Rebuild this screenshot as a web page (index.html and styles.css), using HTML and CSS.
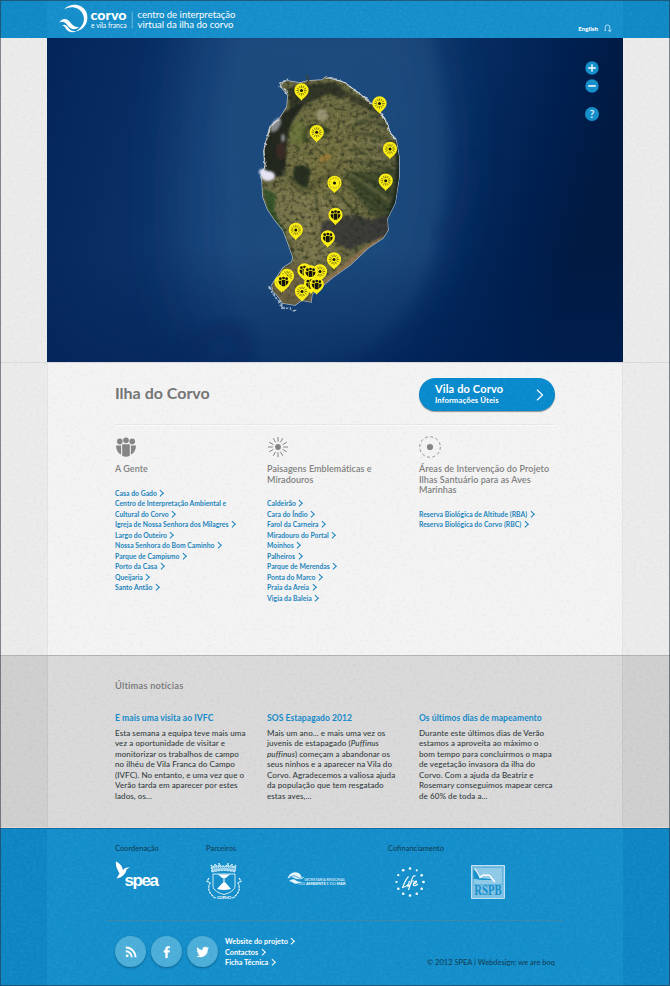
FILE: index.html
```
<!DOCTYPE html>
<html lang="pt">
<head>
<meta charset="utf-8">
<title>Corvo e Vila Franca</title>
<link rel="stylesheet" href="styles.css">
</head>
<body>
<svg class="defs" width="0" height="0" aria-hidden="true">
  <defs>
    <g id="people"><circle cx="-6.200" cy="-5.600" r="2.800"/><circle cx="0" cy="-6.800" r="2.800"/><circle cx="6.200" cy="-5.600" r="2.800"/><path d="M-3.800-2.800h7.600V8.800a9 9 0 0 1-7.600 0zM-4.900-1.500V7.600C-8 6-10 3-10-1.500zM4.900-1.500H10C10 3 8 6 4.900 7.600z"/></g>
    <g id="sun"><circle r="2.900"/><path d="M0-5.200V-10M0 5.200V10M5.200 0H10M-5.200 0H-10M2.400-4.700 4.800-8.800M-2.400-4.700-4.800-8.800M2.400 4.700 4.800 8.800M-2.400 4.700-4.800 8.800M4.600-2.400 8.800-4.800M-4.600-2.400-8.800-4.800M4.600 2.400 8.800 4.800M-4.600 2.400-8.800 4.800" fill="none" stroke="currentColor" stroke-width="1"/></g>
    <g id="area"><circle r="3.100"/><circle r="10.300" fill="none" stroke="currentColor" stroke-width=".9" stroke-dasharray="2.9 2.490"/></g>
    <path id="drop" d="M0 10.200C-2 7.400-7.100 5-7.100-.2A7.100 7.100 0 0 1 7.100-.2C7.100 5 2 7.400 0 10.200z" fill="#fbee15"/>
    <g id="pin-sun"><use href="#drop"/><use href="#sun" transform="scale(.52)"/></g>
    <g id="pin-area"><use href="#drop"/><use href="#area" transform="scale(.5)"/></g>
    <g id="pin-people"><use href="#drop"/><use href="#people" transform="scale(.5)"/></g>
  </defs>
</svg>

<div class="page">
  <header class="band header">
    <div class="column header-row">
      <svg class="logo" width="190" height="34" viewBox="57 0 190 34" fill="#fff">
        <path d="M64 9.500C70 2.500 82 3.500 86 11.500C90 20 85 30 75.500 31.500C83 27 86 20 82.500 13.500C79 7 71 5.500 64 9.500z"/>
        <path d="M59 22.500C63 17.500 67 18.500 70 22C73 26 75 27.500 79 27C75 30.500 71 29.500 68 26C65 22 63 21 59 22.500z"/>
        <path d="M62 25.500C65 23.500 67 26 69 28.500C71 31 73 31.500 77 31C72 33.500 68 32 66 29C65 27 64 25.500 62 25.500z"/>
        <text x="90.500" y="19.500" class="logo-name" textLength="36" lengthAdjust="spacingAndGlyphs">corvo</text>
        <text x="91" y="28" class="logo-sub" textLength="35.500" lengthAdjust="spacingAndGlyphs">e vila franca</text>
        <path d="M131.800 11.500h.7v17h-.7z" opacity=".55"/>
        <text x="137.500" y="18.300" class="logo-tag" textLength="98" lengthAdjust="spacingAndGlyphs">centro de interpretação</text>
        <text x="137.500" y="28" class="logo-tag" textLength="96" lengthAdjust="spacingAndGlyphs">virtual da ilha do corvo</text>
      </svg>
      <a class="lang">English
        <svg width="8" height="9" viewBox="0 0 8 9" fill="none" stroke="#d9effa" stroke-width=".8"><path d="M1.200 6.500V3.200a2.300 2.300 0 0 1 4.600 0V7.500M4.200 6l1.600 1.700L7.500 6M.5 6.500h1.500"/></svg>
      </a>
    </div>
  </header>

  <div class="map-band">
    <div class="map">
      <svg class="island-map" width="576" height="324" viewBox="47 38 576 324">
        <defs>
          <linearGradient id="sea" x1="0" y1="0" x2="1" y2=".15">
            <stop offset="0" stop-color="#02245a"/><stop offset=".2" stop-color="#0a2f65"/><stop offset=".5" stop-color="#113a6e"/><stop offset=".75" stop-color="#062c60"/><stop offset=".9" stop-color="#001f50"/><stop offset="1" stop-color="#001a42"/>
          </linearGradient>
          <linearGradient id="deep" x1="0" y1="0" x2="0" y2="1"><stop offset=".65" stop-color="#002055" stop-opacity="0"/><stop offset="1" stop-color="#002055" stop-opacity=".55"/></linearGradient>
          <radialGradient id="land" cx=".46" cy=".4" r=".6"><stop offset="0" stop-color="#757140"/><stop offset=".5" stop-color="#6a6a42"/><stop offset="1" stop-color="#56563d"/></radialGradient>
          <filter id="soft1" x="-30%" y="-30%" width="160%" height="160%"><feGaussianBlur stdDeviation=".8"/></filter>
          <filter id="soft3" x="-30%" y="-30%" width="160%" height="160%"><feGaussianBlur stdDeviation="2.500"/></filter>
          <filter id="soft8" x="-30%" y="-30%" width="160%" height="160%"><feGaussianBlur stdDeviation="7"/></filter>
          <filter id="soft25" x="-50%" y="-50%" width="200%" height="200%"><feGaussianBlur stdDeviation="26"/></filter>
          <filter id="rough" x="-10%" y="-10%" width="120%" height="120%"><feTurbulence type="fractalNoise" baseFrequency=".25" numOctaves="2" seed="4"/><feDisplacementMap in="SourceGraphic" scale="4" xChannelSelector="R" yChannelSelector="G"/></filter>
          <filter id="grain" x="0" y="0" width="100%" height="100%" color-interpolation-filters="sRGB"><feTurbulence type="fractalNoise" baseFrequency=".22 .25" numOctaves="4" seed="8"/><feColorMatrix values="0 0 0 0 .1  0 0 0 0 .13  0 0 0 0 .08  3 0 0 0 -1.400"/></filter>
          <filter id="grain2" x="0" y="0" width="100%" height="100%" color-interpolation-filters="sRGB"><feTurbulence type="fractalNoise" baseFrequency=".3" numOctaves="3" seed="21"/><feColorMatrix values="0 0 0 0 .68  0 0 0 0 .66  0 0 0 0 .42  0 3 0 0 -1.500"/></filter>
          <path id="isle" d="M280 83L288 81L300 83L308 81L322 80L326 77L335 80L345 83L353 89L365 98L372 104L380 112L387 123L390 133L396 140L399 157L399 177L397 190L395 203L387 219L388 230L383 238L368 248L350 265L333 277L320 288L312 294L311 302L302 300L295 305L283 303L277 295L273 291L272 285L275 280L283 268L292 262L293 257L288 243L283 230L275 220L268 210L263 197L262 180L261 177L265 167L264 150L270 127L280 118L287 107L288 95L282 88z"/>
          <clipPath id="island"><use href="#isle"/></clipPath>
        </defs>
        <rect x="47" y="38" width="576" height="324" fill="url(#sea)"/>
        <path d="M200 0L420 0Q450 95 444 190Q440 270 390 325Q350 380 290 400Q205 380 185 290Q165 190 200 0z" fill="#1e4e83" opacity=".75" filter="url(#soft25)"/>
        <path d="M250 0L420 0Q452 95 446 195Q440 280 390 330Q345 370 270 380Q215 300 225 200Q205 100 250 0z" fill="#22507f" opacity=".45" filter="url(#soft8)"/>
        <path d="M190 350Q212 325 235 330T232 370" stroke="#0a2b60" stroke-width="13" fill="none" opacity=".6" filter="url(#soft8)"/>
        <path d="M440 240Q480 190 470 160" stroke="#0a2c61" stroke-width="16" fill="none" opacity=".4" filter="url(#soft8)"/>
        <rect x="47" y="38" width="576" height="324" fill="url(#deep)"/>
        <use href="#isle" fill="none" stroke="#b4c0cd" stroke-width="1.400"/>
        <g clip-path="url(#island)">
          <rect x="255" y="70" width="150" height="245" fill="url(#land)"/>
          <path d="M262 185L290 190L345 200L330 262L296 264L284 230z" fill="#7c7750" opacity=".7" filter="url(#soft3)"/>
          <rect x="255" y="70" width="150" height="245" filter="url(#grain)" opacity=".6"/>
          <rect x="255" y="70" width="150" height="245" filter="url(#grain2)" opacity=".3"/>
          <path d="M284 112L305 103L293 120L287 140L285 176L264 178L262 150L272 128z" fill="#1d201e" opacity=".9" filter="url(#soft1)"/>
          <path d="M288 88L312 84L335 82L348 94L340 98L328 94L308 103L290 112z" fill="#1e231b" opacity=".7" filter="url(#soft1)"/>
          <path d="M345 90L368 102L384 116L375 112L352 102z" fill="#20251c" opacity=".6" filter="url(#soft1)"/>
          <ellipse cx="281" cy="151" rx="5" ry="9" fill="#4c2f2a" opacity=".6" filter="url(#soft1)"/>
          <path d="M263 188L276 194L274 212L284 230L286 242L268 214z" fill="#264d22" opacity=".75" filter="url(#soft1)"/>
          <path d="M302 141Q298 130 310 125Q330 124 329 134Q324 136 322 128Q312 125 306 131Q306 138 312 143z" fill="#222e18" opacity=".8" filter="url(#soft1)"/>
          <path d="M294 167Q303 162 311 170L307 188Q299 187 293 178z" fill="#1d261d" opacity=".85" filter="url(#soft1)"/>
          <path d="M288 176Q290 186 301 192L316 184L334 172L342 160" stroke="#2d3520" stroke-width="4" fill="none" opacity=".55" filter="url(#soft3)"/>
          <ellipse cx="322" cy="115" rx="6" ry="6" fill="#b4ad92" opacity=".6" filter="url(#soft1)"/>
          <ellipse cx="325" cy="158" rx="7" ry="3" fill="#a88136" opacity=".7" transform="rotate(-25 325 158)" filter="url(#soft1)"/>
          <ellipse cx="298" cy="133" rx="8" ry="12" fill="#6c7c3a" opacity=".6" filter="url(#soft3)"/>
          <path d="M345 172L400 168L398 205L385 225L362 205z" fill="#21301d" opacity=".5" filter="url(#soft3)"/>
          <path d="M322 222L352 214L372 220L393 214L388 236L362 244L350 250L336 243L320 240z" fill="#2e2e35" opacity=".75" filter="url(#soft1)"/>
          <path d="M395 140L402 150V195L390 222L388 216L395 190L396 165z" fill="#15201e" opacity=".85" filter="url(#soft1)"/>
          <path d="M272 286L288 266L310 262L312 302L280 305z" fill="#7a6647" opacity=".5" filter="url(#soft1)"/>
          <path d="M384 238L368 248L340 270L320 286" stroke="#a07b58" stroke-width="5" fill="none" opacity=".7" filter="url(#soft1)"/>
          <g fill="none" stroke="#1c2919" stroke-width="1.600" opacity=".6" filter="url(#soft1)">
            <path d="M348 136Q365 130 384 140M352 148Q366 152 376 166M345 172Q372 178 392 194M342 176Q365 186 388 210M338 182Q360 192 380 210M334 190Q350 206 364 224M326 196Q332 206 344 214M316 196L318 214M356 124Q370 114 382 116M350 128Q370 118 388 124M350 162Q370 160 392 172M288 240l4 6-3 3 5 4"/>
          </g>
          <path d="M283 170Q284 186 306 199L309 230L315 262M345 125Q360 116 375 118M346 144Q366 140 388 146M346 158Q366 154 384 160M340 168Q366 182 390 202M328 190Q338 204 352 218M320 196L326 212M341 150L334 172" stroke="#b3aa76" stroke-width="1.200" fill="none" opacity=".5" filter="url(#soft1)"/>
        </g>
        <path d="M325 78L335 79L345 83L353 89L365 98L372 104L380 112L387 123L390 133L396 139M280 118L270 127L264 150L265 167L261 177" stroke="#e4e9ee" stroke-width="1.200" fill="none" opacity=".75" filter="url(#rough)"/>
        <g fill="#e6e4f3" filter="url(#soft1)"><ellipse cx="268" cy="176" rx="7" ry="5"/><ellipse cx="263" cy="172" rx="4" ry="3"/><ellipse cx="276" cy="125" rx="4" ry="8" opacity=".5" transform="rotate(30 276 125)"/><ellipse cx="283" cy="138" rx="2" ry="4" opacity=".5"/></g>
        <path d="M288 93L280 86L281 84L288 79M270 287l3 8 6 6 4 7 8 1 4 2" stroke="#c6d0da" stroke-width="1.800" stroke-dasharray="3 1" fill="none" opacity=".8" filter="url(#rough)"/>
        <path d="M307 75l2 7" stroke="#3f4030" stroke-width="1.500"/>
        <g color="#15150d" fill="#15150d">
          <use href="#pin-sun" x="301.500" y="90.500"/><use href="#pin-sun" x="379.500" y="103.500"/><use href="#pin-sun" x="316.700" y="132.300"/><use href="#pin-sun" x="390" y="149"/><use href="#pin-sun" x="385.700" y="180.700"/><use href="#pin-area" x="334.500" y="183"/>
          <use href="#pin-people" x="335.500" y="215"/><use href="#pin-people" x="327.800" y="237.500"/><use href="#pin-sun" x="295.800" y="230"/><use href="#pin-sun" x="334" y="259.500"/>
          <use href="#pin-people" x="304.500" y="270.500"/><use href="#pin-sun" x="320" y="271.500"/><use href="#pin-people" x="310.500" y="272.500"/><use href="#pin-sun" x="287" y="276"/><use href="#pin-people" x="281.500" y="282.500"/><use href="#pin-people" x="283.500" y="281.500"/><use href="#pin-people" x="311" y="284"/><use href="#pin-people" x="316.700" y="284.500"/><use href="#pin-sun" x="302" y="291.500"/>
        </g>
      </svg>
      <div class="controls">
        <svg width="14" height="50" viewBox="0 0 14 50" fill="none" stroke="#fff" stroke-width="1.300"><g fill="#168fcb" stroke="none"><circle cx="7" cy="7" r="6.700"/><circle cx="7" cy="25" r="6.700"/></g><path d="M3.200 7h7.600M7 3.200v7.600M3.200 25h7.600"/></svg>
        <span class="help">?</span>
      </div>
    </div>
  </div>

  <main class="band content">
    <div class="column inner">
      <div class="title-row">
        <h1>Ilha do Corvo</h1>
        <a class="cta"><span><b>Vila do Corvo</b><small>Informações Úteis</small></span><svg width="8" height="12" viewBox="0 0 8 12" fill="none" stroke="#fff" stroke-width="1.200"><path d="M1 .8 6.500 6 1 11.200"/></svg></a>
      </div>
      <div class="columns">
        <section>
          <svg class="icon" width="22" height="22" viewBox="-11 -11 22 22"><use href="#people"/></svg>
          <h2>A Gente</h2>
          <ul class="links">
            <li>Casa do Gado</li><li>Centro de Interpretação Ambiental e<br>Cultural do Corvo</li><li>Igreja de Nossa Senhora dos Milagres</li><li>Largo do Outeiro</li><li>Nossa Senhora do Bom Caminho</li><li>Parque de Campismo</li><li>Porto da Casa</li><li>Queijaria</li><li>Santo Antão</li>
          </ul>
        </section>
        <section>
          <svg class="icon" width="22" height="22" viewBox="-11 -11 22 22"><use href="#sun"/></svg>
          <h2>Paisagens Emblemáticas e<br>Miradouros</h2>
          <ul class="links">
            <li>Caldeirão</li><li>Cara do Índio</li><li>Farol da Carneira</li><li>Miradouro do Portal</li><li>Moinhos</li><li>Palheiros</li><li>Parque de Merendas</li><li>Ponta do Marco</li><li>Praia da Areia</li><li>Vigia da Baleia</li>
          </ul>
        </section>
        <section>
          <svg class="icon" width="22" height="22" viewBox="-11 -11 22 22"><use href="#area"/></svg>
          <h2>Áreas de Intervenção do Projeto<br>Ilhas Santuário para as Aves<br>Marinhas</h2>
          <ul class="links">
            <li>Reserva Biológica de Altitude (RBA)</li><li>Reserva Biológica do Corvo (RBC)</li>
          </ul>
        </section>
      </div>
    </div>
  </main>

  <section class="band news">
    <div class="column inner">
      <h2>Últimas notícias</h2>
      <div class="columns">
        <article><h3>E mais uma visita ao IVFC</h3><p>Esta semana a equipa teve mais uma<br>vez a oportunidade de visitar e<br>monitorizar os trabalhos de campo<br>no ilhéu de Vila Franca do Campo<br>(IVFC). No entanto, e uma vez que o<br>Verão tarda em aparecer por estes<br>lados, os...</p></article>
        <article><h3>SOS Estapagado 2012</h3><p>Mais um ano... e mais uma vez os<br>juvenis de estapagado (<i>Puffinus<br>puffinus</i>) começam a abandonar os<br>seus ninhos e a aparecer na Vila do<br>Corvo. Agradecemos a valiosa ajuda<br>da população que tem resgatado<br>estas aves,...</p></article>
        <article><h3>Os últimos dias de mapeamento</h3><p>Durante este últimos dias de Verão<br>estamos a aproveita ao máximo o<br>bom tempo para concluirmos o mapa<br>de vegetação invasora da ilha do<br>Corvo. Com a ajuda da Beatriz e<br>Rosemary conseguimos mapear cerca<br>de 60% de toda a...</p></article>
      </div>
    </div>
  </section>

  <footer class="band footer">
    <div class="column inner">
      <div class="partners">
        <div class="partner coord"><h4>Coordenação</h4>
          <svg width="46" height="32" viewBox="115 860 46 32" fill="#fff"><path d="M116 861.500C119 863 122.500 865.500 122.800 870.300C124.500 868 127 867.200 129.800 867.300L126.500 869.500C125.500 874.500 122 877.500 116.500 878.500L119.500 873.500C117.500 869.500 115.300 866 116 861.500z"/><text x="124.500" y="886" class="spea" textLength="34.500">spea</text></svg>
        </div>
        <div class="partner parc"><h4>Parceiros</h4>
          <div class="logos">
            <svg width="36" height="40" viewBox="207 860 36 40" fill="none" stroke="#e4f4fc" stroke-width="1"><path d="M213 871L212 864l3 2 1-3 3 3 1-4 2 3h5l2-3 1 4 3-3 1 3 3-2-1 7Q225 868 213 871z" fill="#9dd4ef" stroke-dasharray="2 1"/><path d="M214 868q11-3 22 0" stroke="#168fcb" stroke-dasharray="1 1"/><path d="M214 873h22v12c0 4-5 7-11 8.500-6-1.500-11-4.500-11-8.500z" stroke-width=".9"/><path d="M218.500 873.500h13q-3 1-4.500 3.500h-4q-1.500-2.500-4.500-3.500zM224 881.500h2.500l5.500 6.500q-7 2-14 0zM218 889.500h14" fill="#fff" stroke="none"/><path d="M225 876v6" stroke-width="1.300"/><path d="M210 877l-2 3 3 2q-3 6 1 11 3 4 5 4M240 877l2 3-3 2q3 6-1 11-3 4-5 4" stroke-width="1.300" stroke-dasharray="2.400 .8"/><text x="218" y="898" class="crest" textLength="14.500">CORVO</text></svg>
            <svg width="60" height="20" viewBox="288 873 60 20" fill="#e9f7fd"><path d="M288.500 881Q290 875 295.500 874.300Q301.500 874.500 302.500 879H305l-2 2q-6 1-8.500-1.500-3-1.500-6 1.500zM290 883q4-3 7-.5 3 2 6 1l-2.500 1.500q-4 1.500-6 0-2-1.500-4.500-2z"/><path d="M291 879q4-3 7 0t6 0" fill="none" stroke="#168fcb" stroke-width=".7"/><text x="305.200" y="882.800" class="sec" textLength="41" lengthAdjust="spacingAndGlyphs">SECRETARIA REGIONAL</text><text x="300" y="887.400" class="sec" textLength="46.500" lengthAdjust="spacingAndGlyphs">DO <tspan font-weight="900">AMBIENTE</tspan> E DO <tspan font-weight="900">MAR</tspan></text></svg>
          </div>
        </div>
        <div class="partner cof"><h4>Cofinanciamento</h4>
          <div class="logos">
            <svg width="32" height="32" viewBox="-16 -16 32 32"><g fill="#fff"><circle cy="-13.500" r="1.300"/><circle cx="6.800" cy="-11.700" r="1.100"/><circle cx="11.700" cy="-6.800" r="1.300"/><circle cx="13.500" r="1.300"/><circle cx="11.700" cy="6.800" r="1.300"/><circle cx="6.800" cy="11.700" r="1.300"/><circle cy="13.500" r="1.300"/><circle cx="-6.800" cy="11.700" r="1.300"/><circle cx="-11.700" cy="6.800" r="1.300"/><circle cx="-13.500" r="1.100"/><circle cx="-11.700" cy="-6.800" r="1.100"/><circle cx="-6.800" cy="-11.700" r="1.300"/></g><path d="M-1.500-5.500Q-4-3-7.500 5.500Q-4 5-1.500 2M-.5-1L-2.200 4.500Q0 4 1.500.500M5.500-6Q2.500-7 1.500-1L-1.500 8M.5-1H4M3.200 2Q7 1 6.500-.8Q5-1.500 3.300 2Q3 5.500 8 2" fill="none" stroke="#fff" stroke-width="1.100"/></svg>
            <svg width="34" height="34" viewBox="0 0 34 34"><path d="M.5.500h33v33H.5z" fill="#7fc2e5" stroke="#bfe1f3"/><path d="M2.500 2.500h29v17h-29z" fill="#8fcbe8" stroke="#4aa9d8" stroke-width=".6"/><path d="M2.500 4Q6 7 9 13L22 14.500Q12 16 2.500 13.500z" fill="#168fcb"/><path d="M8.500 13Q12 9 15 10.500Q19 9 20.500 13L24 17" stroke="#fff" stroke-width="1.500" fill="none" stroke-linejoin="round"/><path d="M4 3.500L9 12.500" stroke="#fff" stroke-width=".9"/><text x="3.300" y="30.200" class="rspb" textLength="27.500" lengthAdjust="spacingAndGlyphs">RSPB</text></svg>
          </div>
        </div>
      </div>
      <div class="bottom">
        <div class="social">
          <a><svg width="12" height="12" viewBox="0 0 12 12" fill="none" stroke="#fff" stroke-width="1.900"><circle cx="2.200" cy="9.800" r="1.400" fill="#fff" stroke="none"/><path d="M.8 5.200a6 6 0 0 1 6 6M.8 1.500a9.700 9.700 0 0 1 9.700 9.700"/></svg></a>
          <a><svg width="12" height="12" viewBox="0 0 12 12" fill="#fff"><path d="M4.300 12V6.500H2.700V4.300h1.600V3C4.300 1 5.400.2 7 .2h1.900v2.100H7.600c-.7 0-.9.300-.9.900v1.100h2.200l-.3 2.200H6.700V12z"/></svg></a>
          <a><svg width="13" height="12" viewBox="0 0 24 22" fill="#fff"><path d="M23.900 3.600c-.8.400-1.700.7-2.700.8 1-.6 1.700-1.500 2.100-2.600-.9.500-1.900.9-3 1.100a4.800 4.800 0 0 0-8.200 4.400C8.100 7.100 4.600 5.200 2.200 2.300c-1.300 2.200-.7 5 1.500 6.500-.8 0-1.500-.2-2.200-.6 0 2.300 1.600 4.400 3.900 4.900-.7.200-1.400.2-2.200.1.600 1.900 2.400 3.300 4.500 3.400A9.700 9.700 0 0 1 .6 18.500a13.700 13.700 0 0 0 21-12.300c.9-.7 1.700-1.600 2.300-2.600z"/></svg></a>
        </div>
        <ul class="links foot-links"><li>Website do projeto</li><li>Contactos</li><li>Ficha Técnica</li></ul>
        <p class="copy">© 2012 SPEA | Webdesign: we are boq</p>
      </div>
    </div>
  </footer>
  <svg class="paper" width="670" height="986" aria-hidden="true">
    <defs>
      <filter id="fibre-dark" x="0" y="0" width="100%" height="100%" color-interpolation-filters="sRGB"><feTurbulence type="fractalNoise" baseFrequency=".3 .42" numOctaves="3" seed="3"/><feColorMatrix values="0 0 0 0 0  0 0 0 0 0  0 0 0 0 0  1 0 0 0 -.5"/></filter>
      <filter id="fibre-light" x="0" y="0" width="100%" height="100%" color-interpolation-filters="sRGB"><feTurbulence type="fractalNoise" baseFrequency=".3 .42" numOctaves="3" seed="3"/><feColorMatrix values="0 0 0 0 1  0 0 0 0 1  0 0 0 0 1  -1 0 0 0 .5"/></filter>
      <clipPath id="paper-area"><path d="M0 0H670V38H0zM0 38H47V362H0zM623 38H670V362H623zM0 362H670V986H0z"/></clipPath>
    </defs>
    <g clip-path="url(#paper-area)"><rect width="670" height="986" filter="url(#fibre-dark)" opacity=".08"/><rect width="670" height="986" filter="url(#fibre-light)" opacity=".12"/></g>
  </svg>
</div>
</body>
</html>
```
FILE: styles.css
```
* { box-sizing: border-box; }
body { margin: 0; font-family: Lato, "Open Sans", sans-serif; color: #333c41; }
h1, h2, h3, h4, p, ul { margin: 0; padding: 0; font-weight: 400; }
ul { list-style: none; }
svg { display: block; flex: none; overflow: visible; }
.defs { position: absolute; }
.page { position: relative; width: 670px; height: 986px; overflow: hidden; }
.page::after { content: ""; position: absolute; inset: 0; border: 1px solid rgba(40, 50, 60, .55); pointer-events: none; }
.paper { position: absolute; inset: 0; pointer-events: none; }
.column { width: 576px; margin: 0 auto; height: 100%; }
.inner { padding: 0 68px; }

.header { height: 38px; background: #118ac6; }
.header .column { background: #168fcb; }
.header-row { display: flex; justify-content: space-between; padding: 0 11px 0 10px; }
.logo-name { font: 900 14px Lato, sans-serif; }
.logo-sub { font: 400 7.500px Lato, sans-serif; }
.logo-tag { font: 400 10px Lato, sans-serif; }
.lang { display: flex; align-items: center; gap: 6px; height: 10px; margin-top: 23px; color: #fff; font-size: 6.200px; font-weight: 900; }

.map-band { height: 324px; background: #ebebeb; }
.map { position: relative; width: 576px; margin: 0 auto; }
.island-map { overflow: hidden; }
.controls { position: absolute; left: 538px; top: 23px; }
.help { display: block; margin-top: -4.500px; width: 14px; height: 14px; border-radius: 50%; background: #168fcb; color: #fff; font-size: 11px; font-weight: 400; line-height: 14px; text-align: center; }

.content { height: 293px; background: #ebebeb; border-top: 1px solid #dadada; }
.content .column { background: #f3f3f3; border: solid #e4e4e4; border-width: 0 1px; }
.content .inner, .news .inner { padding: 0 67px; }
.title-row { display: flex; justify-content: space-between; height: 62px; border-bottom: 1px solid #e8e8e8; box-shadow: 0 1px #fafafa; }
h1 { margin-top: 20px; font-size: 16px; line-height: 20px; font-weight: 700; color: #757575; }
.cta { display: flex; justify-content: space-between; align-items: center; width: 136px; height: 33px; margin: 15px 0 0; padding: 0 11px 0 16px; border-radius: 17px; background: #098bcd; color: #fff; box-shadow: 0 1px 1px rgba(0, 0, 0, .4); }
.cta b, .cta small { display: block; white-space: nowrap; }
.cta b { font-size: 11px; line-height: 12px; letter-spacing: .15px; }
.cta small { font-size: 7.700px; line-height: 11px; font-weight: 700; letter-spacing: .09px; }
.columns { display: grid; grid-template-columns: repeat(3, 152px); white-space: nowrap; }
.icon { margin: 11px 0 6px; fill: #858585; color: #858585; }
.columns h2 { font-size: 9px; line-height: 10.500px; font-weight: 600; color: #808080; letter-spacing: .07px; }
.links { font-size: 6.800px; line-height: 10.500px; font-weight: 700; color: #1c85bd; letter-spacing: .03px; }
.content .links { margin-top: 13px; }
.links li::after { content: ""; display: inline-block; width: 3.600px; height: 3.600px; margin-left: 1.500px; border: solid; border-width: .8px .8px 0 0; transform: translateY(-.3px) rotate(45deg); }

.news { height: 173px; background: #cfcfcf; border-top: 1px solid #b4b4b4; border-bottom: 1px solid #e5d9d3; }
.news .column { background: #d9d9d9; border: solid #c8c8c8; border-width: 0 1px; }
.news .inner > h2 { padding-top: 24px; font-size: 9.400px; line-height: 12px; font-weight: 600; color: #777; letter-spacing: .17px; }
.news .columns { margin-top: 20px; }
.news h3 { font-size: 8.500px; line-height: 12px; font-weight: 700; color: #148acb; letter-spacing: .07px; }
.news p { margin-top: 4px; font-size: 8px; line-height: 10.450px; font-weight: 500; letter-spacing: .08px; }

.footer { height: 158px; background: #1086c5; border-top: 1px solid #0d6ea3; }
.footer .column { background: #158fcb; }
.partners { display: flex; height: 92px; margin: 0 -8px; padding: 14px 8px 0; border-bottom: 1px solid #3f87ad; white-space: nowrap; }
.partner h4 { font-size: 7.500px; line-height: 11px; color: #103f5a; font-weight: 500; }
.coord { width: 91px; }
.coord svg { margin-top: 6px; }
.parc { width: 182px; }
.logos { display: flex; }
.parc .logos { gap: 45px; align-items: center; margin-top: 7px; }
.cof .logos { gap: 45px; align-items: center; margin: 11px 0 0 6px; }
.spea { font: 700 17px "Liberation Sans", sans-serif; }
.crest { font: 700 4.500px Lato, sans-serif; fill: #fff; stroke: none; }
.sec { font: 400 4px Lato, sans-serif; }
.rspb { font: 700 15px "Liberation Serif", serif; fill: #168fcb; }
.bottom { display: flex; padding-top: 15px; }
.social { display: flex; gap: 5px; }
.social a { display: flex; align-items: center; justify-content: center; width: 31px; height: 31px; border-radius: 50%; background: #4dafd9; box-shadow: 0 1px 2px rgba(0, 50, 80, .5); }
.foot-links { margin: 1px 0 0 7px; color: #fff; font-size: 7.300px; }
.copy { margin: 22px 0 0 auto; font-size: 7.500px; line-height: 10px; color: #103f5a; font-weight: 500; white-space: nowrap; }
```
